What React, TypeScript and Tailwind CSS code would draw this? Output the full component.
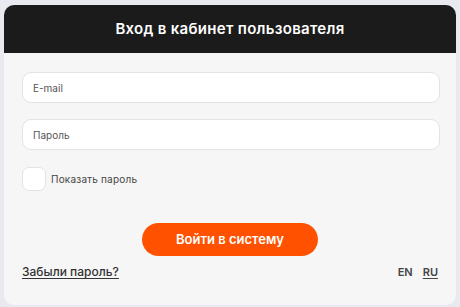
export default function App() {
  return (
    <div
      className="w-[460px] h-[307px] bg-[#e9eaef] pt-[5px] pl-[4px] overflow-hidden"
      style={{ fontFamily: "Inter, 'Noto Sans', sans-serif" }}
    >
      <div className="w-[452px] h-[300px] rounded-[10px] overflow-hidden bg-[#f6f6f6] flex flex-col">
        <div className="h-[48px] bg-[#1b1b1b] flex items-center justify-center">
          <h1 className="text-white text-[15px] font-semibold tracking-[0.3px]">
            Вход в кабинет пользователя
          </h1>
        </div>
        <div className="flex-1 px-[18px] pt-[19px] flex flex-col">
          <input
            placeholder="E-mail"
            className="w-[418px] h-[31px] bg-white border border-[#e3e3e3] rounded-[9px] px-[10px] text-[10px] text-[#333] placeholder:text-[#555] outline-none"
          />
          <input
            placeholder="Пароль"
            className="mt-[16px] w-[418px] h-[31px] bg-white border border-[#e3e3e3] rounded-[9px] px-[10px] text-[10px] text-[#333] placeholder:text-[#555] outline-none"
          />
          <label className="mt-[17px] flex items-center gap-[5px]">
            <span className="w-[24px] h-[24px] bg-white border border-[#e3e3e3] rounded-[7px]" />
            <span className="text-[10px] text-[#444] tracking-[0.2px]">Показать пароль</span>
          </label>
          <div className="mt-[32px] flex justify-center">
            <button className="w-[176px] h-[33px] rounded-full bg-[#ff5100] text-white text-[13px] font-semibold">
              Войти в систему
            </button>
          </div>
          <div className="mt-[7px] flex items-center justify-between text-[11px] text-[#333]">
            <a className="underline underline-offset-2 text-[12px] font-medium">Забыли пароль?</a>
            <div className="flex gap-[10px] font-semibold text-[#444]">
              <span>EN</span>
              <span className="underline underline-offset-2">RU</span>
            </div>
          </div>
        </div>
      </div>
    </div>
  );
}
